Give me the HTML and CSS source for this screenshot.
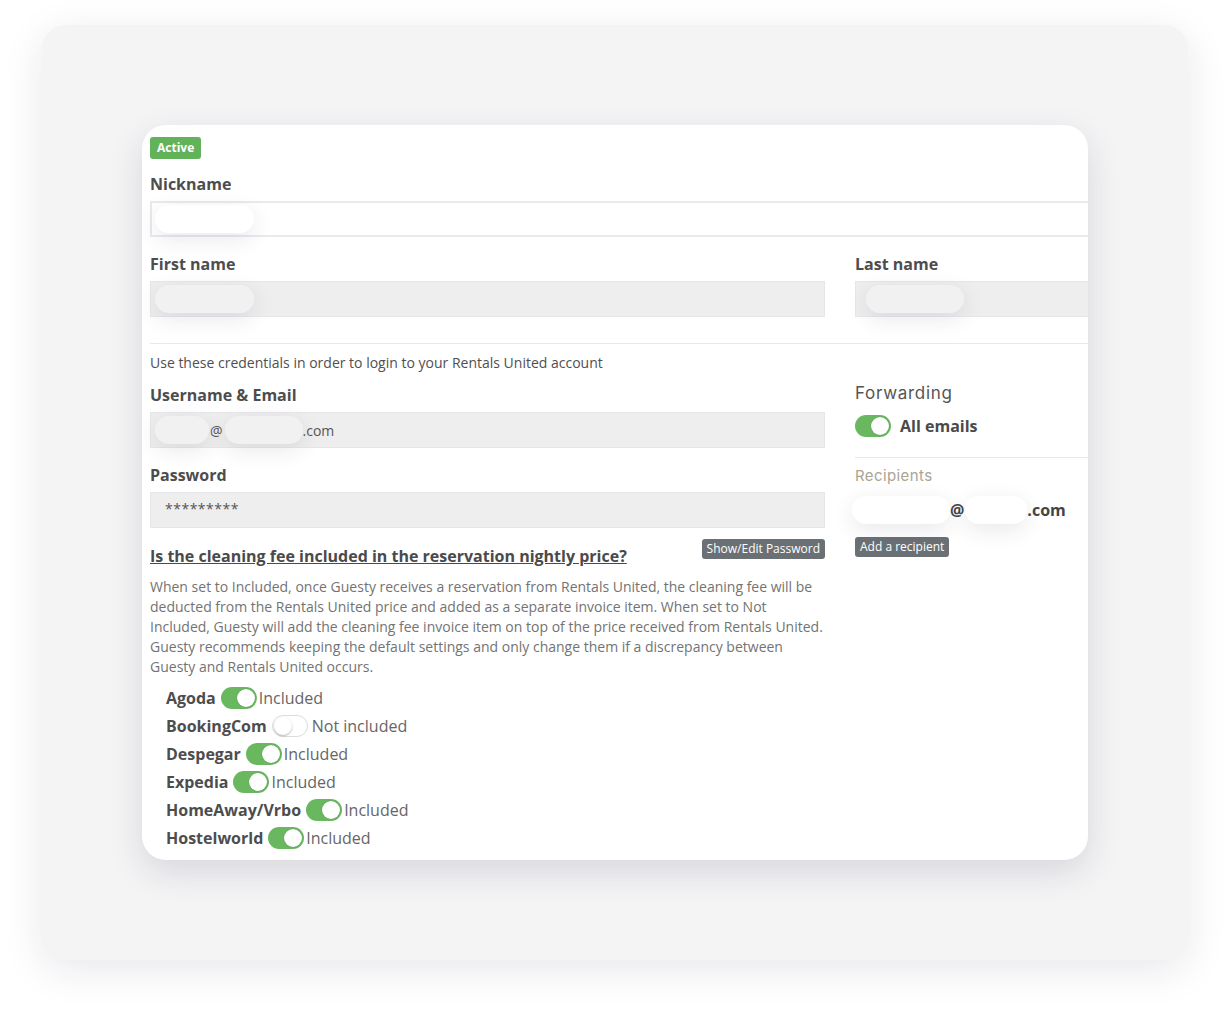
FILE: index.html
```html
<!DOCTYPE html>
<html>
<head>
<meta charset="utf-8">
<link rel="stylesheet" href="styles.css">
</head>
<body>
<div class="outer">
  <div class="card">
    <div class="content">
      <span class="badge">Active</span>
      <label class="lbl lbl-nick">Nickname</label>
      <div class="input input-white"><span class="blob blob-nick"></span></div>
      <div class="row row-names">
        <div class="col-left">
          <label class="lbl">First name</label>
          <div class="input input-grey"><span class="blob blob-nick"></span></div>
        </div>
        <div class="col-right">
          <label class="lbl">Last name</label>
          <div class="input input-grey"><span class="blob blob-last"></span></div>
        </div>
      </div>
      <hr class="sep">
      <div class="row">
        <div class="col-left">
          <p class="hint">Use these credentials in order to login to your Rentals United account</p>
          <label class="lbl lbl-user">Username &amp; Email</label>
          <div class="input input-grey input-text"><span class="blob blob-u1"></span><span class="at">@</span><span class="blob blob-u2"></span><span>.com</span></div>
          <label class="lbl lbl-pass">Password</label>
          <div class="input input-grey input-text pass">*********</div>
          <div class="q-row">
            <span class="question">Is the cleaning fee included in the reservation nightly price?</span>
            <span class="btn btn-show">Show/Edit Password</span>
          </div>
          <p class="desc">When set to Included, once Guesty receives a reservation from Rentals United, the cleaning fee will be deducted from the Rentals United price and added as a separate invoice item. When set to Not Included, Guesty will add the cleaning fee invoice item on top of the price received from Rentals United. Guesty recommends keeping the default settings and only change them if a discrepancy between Guesty and Rentals United occurs.</p>
          <ul class="channels">
            <li><b>Agoda</b><span class="switch on"></span><span class="state">Included</span></li>
            <li><b>BookingCom</b><span class="switch off"></span><span class="state state-off">Not included</span></li>
            <li><b>Despegar</b><span class="switch on"></span><span class="state">Included</span></li>
            <li><b>Expedia</b><span class="switch on"></span><span class="state">Included</span></li>
            <li><b>HomeAway/Vrbo</b><span class="switch on"></span><span class="state">Included</span></li>
            <li><b>Hostelworld</b><span class="switch on"></span><span class="state">Included</span></li>
          </ul>
        </div>
        <div class="col-right">
          <div class="fwd-title">Forwarding</div>
          <div class="fwd-row"><span class="switch on"></span><b>All emails</b></div>
          <hr class="sep sep-right">
          <div class="recip-title">Recipients</div>
          <div class="recip"><span class="blob blob-r1"></span><span>@</span><span class="blob blob-r2"></span><span>.com</span></div>
          <div class="btn btn-add">Add a recipient</div>
        </div>
      </div>
    </div>
  </div>
</div>
</body>
</html>
```
FILE: styles.css
```css
* { box-sizing: border-box; }
html, body { margin: 0; background: #ffffff; }
body {
  padding: 25px 0 0 42px;
  font-family: "Open Sans", "Liberation Sans", sans-serif;
  color: #4f4f4f;
  width: 1230px;
  height: 1019px;
  overflow: hidden;
}
.outer {
  width: 1146px;
  height: 935px;
  background: #f4f4f5;
  border-radius: 24px;
  box-shadow: 0 10px 40px rgba(30, 30, 70, 0.10);
  padding: 100px 0 0 100px;
}
.card {
  width: 946px;
  height: 735px;
  background: #ffffff;
  border-radius: 24px;
  overflow: hidden;
  box-shadow: 0 12px 34px rgba(30, 30, 70, 0.13);
}
.content {
  width: 1036px;
  padding: 12px 0 0 8px;
}
.badge {
  display: block;
  width: fit-content;
  background: #62b25a;
  color: #fff;
  font-weight: 700;
  font-size: 12px;
  line-height: 22px;
  height: 22px;
  padding: 0 7px;
  border-radius: 3px;
}
.lbl {
  display: block;
  font-weight: 700;
  font-size: 16px;
  line-height: 22px;
  color: #4d4d4d;
  margin: 0 0 6px;
}
.lbl-nick { margin-top: 14px; }
.input {
  height: 36px;
  width: 100%;
  position: relative;
  display: flex;
  align-items: center;
}
.input-white {
  border: 2px solid #e9e9ee;
  background: #fff;
  padding-left: 3px;
}
.input-grey {
  background: #eeeeee;
  border: 1px solid #e6e6ea;
  padding-left: 4px;
}
.input-text {
  font-size: 14px;
  color: #555;
}
.pass {
  padding-left: 14px;
  letter-spacing: 0.5px;
  padding-bottom: 4px;
}
.blob {
  display: inline-block;
  background: #ffffff;
  border-radius: 14px;
  height: 28px;
  box-shadow: 0 6px 22px rgba(40, 40, 80, 0.10);
}
.input-grey .blob { background: #f1f1f2; }
.blob-nick { width: 99px; }
.blob-last { width: 98px; margin-left: 6px; }
.blob-u1 { width: 54px; }
.blob-u2 { width: 78px; margin-left: 2px; }
.at { margin-left: 1px; }
.row { display: flex; gap: 30px; }
.col-left { width: 675px; flex: none; }
.col-right { width: 323px; flex: none; }
.row-names { margin-top: 16px; }
.sep {
  border: 0;
  border-top: 1px solid #e8e8ec;
  margin: 26px 0 0;
  height: 0;
}
.hint {
  margin: 9px 0 0;
  font-size: 14px;
  line-height: 20px;
  color: #4f4f4f;
}
.lbl-user { margin-top: 11px; }
.lbl-pass { margin-top: 16px; }
.q-row {
  display: flex;
  justify-content: space-between;
  align-items: flex-start;
  margin-top: 11px;
}
.question {
  font-weight: 700;
  font-size: 16px;
  line-height: 22px;
  color: #4a4a4a;
  text-decoration: underline;
  margin-top: 6px;
}
.btn {
  display: inline-block;
  background: #6b7075;
  color: #fff;
  font-size: 12px;
  line-height: 19px;
  height: 20px;
  padding: 0 5px;
  border-radius: 3px;
}
.desc {
  margin: 10px 0 0;
  font-size: 14px;
  line-height: 20px;
  color: #737373;
}
.channels {
  list-style: none;
  margin: 7px 0 0;
  padding: 0 0 0 16px;
}
.channels li {
  display: flex;
  align-items: center;
  height: 28px;
  font-size: 16px;
}
.channels b { color: #4d4d4d; }
.switch {
  display: inline-block;
  position: relative;
  width: 36px;
  height: 22px;
  border-radius: 11px;
  margin: 0 2px 0 5px;
  flex: none;
}
.switch::after {
  content: "";
  position: absolute;
  top: 2px;
  width: 18px;
  height: 18px;
  border-radius: 50%;
  background: #fff;
  box-shadow: 0 0 1px rgba(0,0,0,0.35);
}
.switch.on { background: #69b860; }
.switch.on::after { right: 2px; }
.switch.off {
  background: #fff;
  border: 1px solid #dcdcdc;
}
.switch.off::after { left: 1px; top: 1px; box-shadow: 0 1px 2px rgba(0,0,0,0.3); }
.state { color: #666; }
.state-off { margin-left: 2px; }
.fwd-title {
  font-family: Inter, "Noto Sans", sans-serif;
  font-size: 17px;
  font-weight: 400;
  letter-spacing: 0.7px;
  color: #555;
  margin-top: 38px;
  line-height: 22px;
}
.fwd-row {
  display: flex;
  align-items: center;
  gap: 9px;
  margin-top: 11px;
  font-size: 16px;
  color: #4a4a4a;
}
.fwd-row .switch { margin: 0; }
.sep-right { margin-top: 20px; }
.recip-title {
  font-family: Inter, "Noto Sans", sans-serif;
  font-size: 15px;
  letter-spacing: 0.4px;
  color: #a9a493;
  margin-top: 8px;
  line-height: 20px;
}
.recip {
  display: flex;
  align-items: center;
  margin: 10px 0 0 -3px;
  font-weight: 700;
  font-size: 16px;
  color: #444;
}
.blob-r1 { width: 98px; }
.blob-r2 { width: 62px; margin-left: 1px; }
.btn-add { display: block; width: fit-content; margin-top: 13px; font-size: 12px; }
```
